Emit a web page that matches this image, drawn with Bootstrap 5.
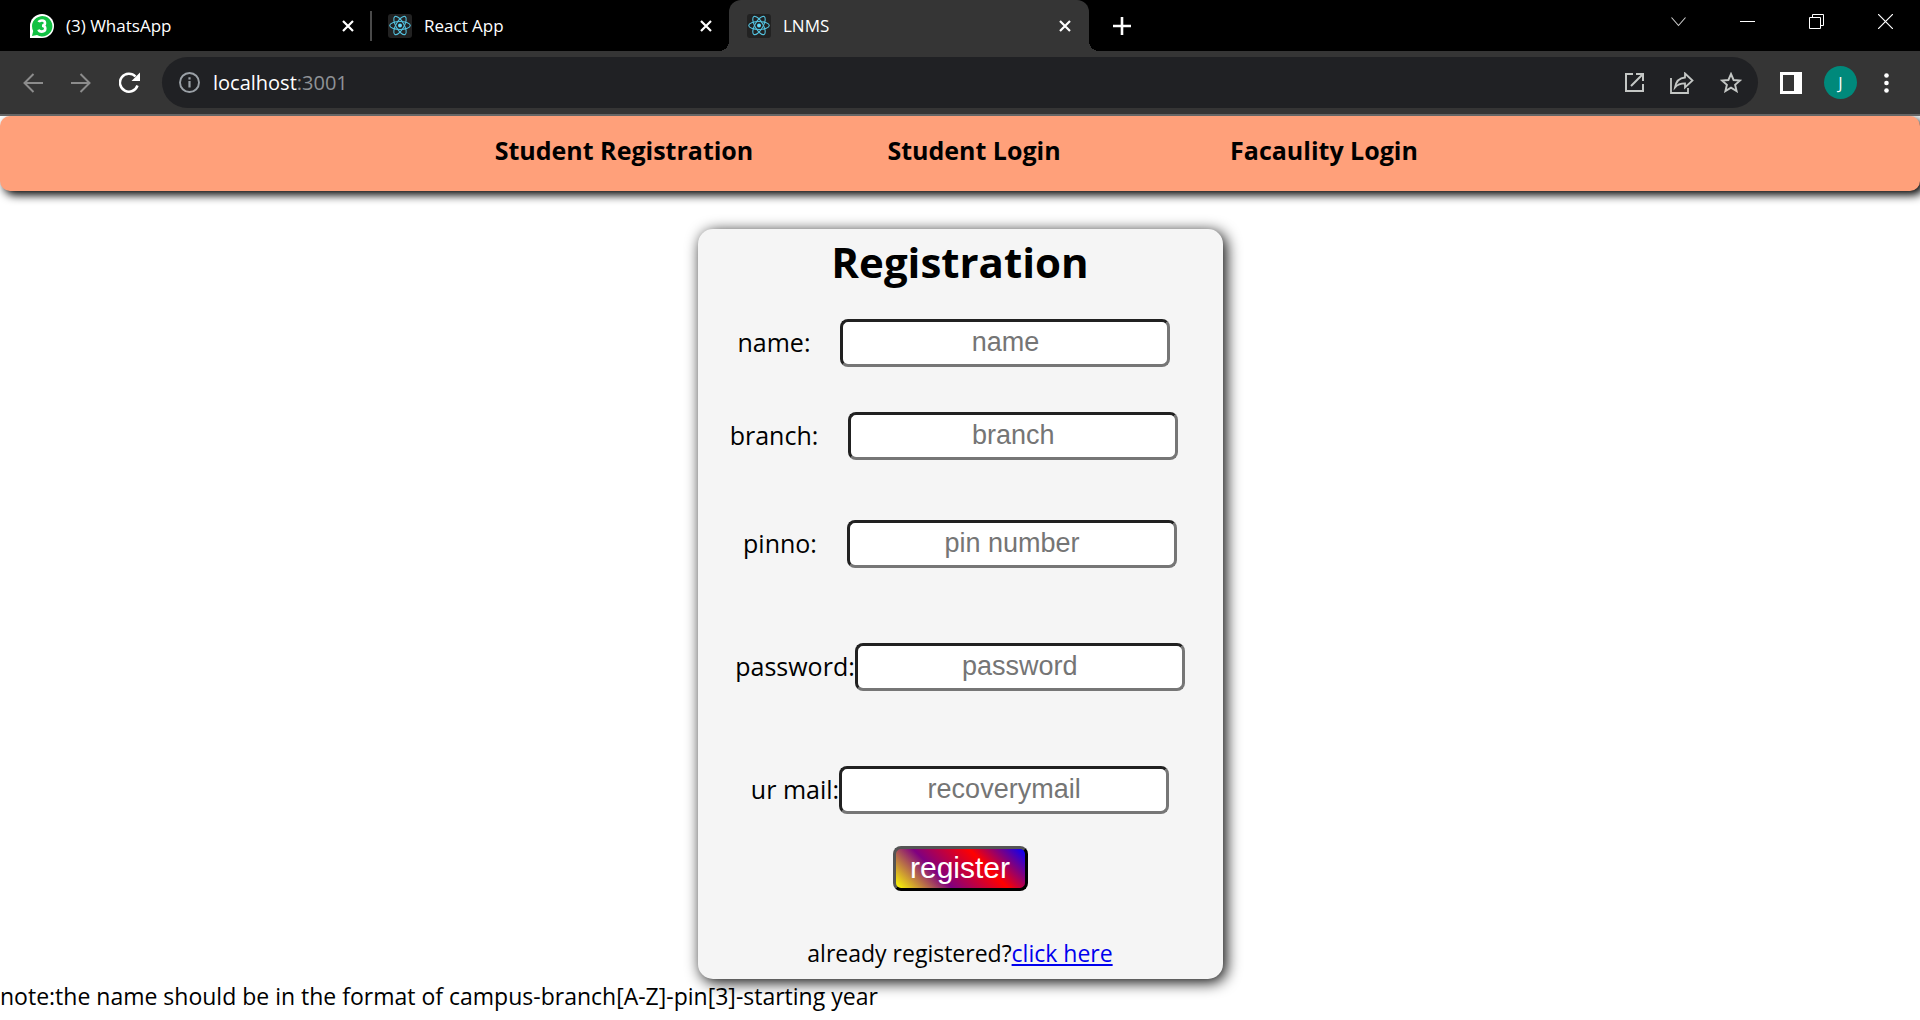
<!DOCTYPE html>
<html lang="en">
<head>
<meta charset="utf-8">
<meta name="viewport" content="width=device-width, initial-scale=1">
<title>LNMS</title>
<link href="https://cdn.jsdelivr.net/npm/bootstrap@5.3.0/dist/css/bootstrap.min.css" rel="stylesheet">
<style>
body { font-family: "Open Sans", "Noto Sans", sans-serif; font-size: 23px; line-height: 32px; color: #000; background: #fff; overflow-x: hidden; }
svg { display: block; flex: none; }
.tab-strip { background: #000; height: 51px; color: #fff; font-size: 17px; line-height: 24px; padding-left: 14px; }
.browser-tab { width: 358px; padding: 0 18px 0 16px; }
.browser-tab.selected { width: 360px; padding: 0 18px; margin-left: -1px; background: #353535; border-radius: 12px 12px 0 0; position: relative; }
.browser-tab.selected::before, .browser-tab.selected::after { content: ""; position: absolute; bottom: 0; width: 10px; height: 10px; }
.browser-tab.selected::before { right: 100%; background: radial-gradient(circle at 0 0, transparent 10px, #353535 10px); }
.browser-tab.selected::after { left: 100%; background: radial-gradient(circle at 100% 0, transparent 10px, #353535 10px); }
.tab-divider { width: 2px; height: 30px; margin-left: -2px; background: #4a4a4a; }
.plain-btn { border: 0; padding: 0; background: none; color: inherit; display: block; }
.window-controls { gap: 54px; padding-right: 27px; height: 43px; }
.toolbar { background: #353535; height: 65px; padding: 6px 30px 6px 23px; border-bottom: 2px solid #666; color: #fff; gap: 22px; }
.nav-icons { gap: 28px; }
.address-bar { height: 51px; border-radius: 26px; background: #202124; padding: 0 16px 0 17px; gap: 13px; }
.address-text { font-size: 20px; line-height: 28px; }
.address-text span { color: #8f9296; }
.address-icons { gap: 26px; color: #c4c7c5; }
.avatar { width: 33px; height: 33px; background: #00897b; font-size: 16px; line-height: 24px; }
.site-nav { background: #ffa07a; height: 75px; border-radius: 10px; box-shadow: 4px 4px 10px #000; padding: 16px 0 0 28px; }
.site-nav a { width: 350px; font-size: 25px; line-height: 36px; font-weight: 700; color: #000; text-align: center; text-decoration: none; }
.page-shade { background: #fff; }
.register-card { width: 525px; margin: 38px auto 0; background: #f5f5f5; border-radius: 15px; box-shadow: 3px 3px 15px #000; padding-bottom: 10px; }
.register-card h1 { font-size: 42px; line-height: 60px; font-weight: 700; margin: 0 0 27px; padding-top: 3px; }
.field-row { font-size: 25px; line-height: 36px; }
.field-row label { padding-bottom: 2px; }
.field-row.spaced { gap: 30px; }
.field-row.inset-end { padding-right: 12px; }
.gap-45 { margin-bottom: 45px; }
.gap-60 { margin-bottom: 60px; }
.gap-75 { margin-bottom: 75px; }
.text-entry { width: 330px; height: 48px; border: 3px inset #767676; border-radius: 8px; padding: 0 3px 2px; background: #fff; text-align: center; font: 27px/36px "Liberation Sans", Arial, sans-serif; }
.text-entry::placeholder { color: #757575; }
.register-btn { width: 135px; height: 45px; border: 3px outset #000; border-radius: 8px; margin: 32px auto 46px; padding: 0 0 2px; color: #fff; font: 30px/34px "Liberation Sans", Arial, sans-serif; background: linear-gradient(45deg, yellow, purple, red, blue); }
.login-line a { color: #0000ee; }
.format-note { padding-top: 1px; }
</style>
<script src="https://cdn.jsdelivr.net/npm/bootstrap@5.3.0/dist/js/bootstrap.bundle.min.js"></script>
</head>
<body>
<svg width="0" height="0" class="position-absolute" aria-hidden="true">
  <symbol id="react" viewBox="0 0 24 24">
    <rect width="24" height="24" rx="3" fill="#222"/>
    <g fill="none" stroke="#53c1de" stroke-width="1.1">
      <ellipse cx="12" cy="11.500" rx="10.300" ry="4"/>
      <ellipse cx="12" cy="11.500" rx="10.300" ry="4" transform="rotate(60 12 11.500)"/>
      <ellipse cx="12" cy="11.500" rx="10.300" ry="4" transform="rotate(120 12 11.500)"/>
    </g>
    <circle cx="12" cy="11.500" r="2" fill="#61dafb"/>
  </symbol>
  <symbol id="cross" viewBox="0 0 12 12"><path d="M1 1l10 10M11 1L1 11" stroke="#fff" stroke-width="2.200" fill="none"/></symbol>
</svg>

<header>
  <div class="tab-strip d-flex align-items-center">
    <div class="browser-tab d-flex align-items-center h-100">
      <svg class="me-2" width="24" height="24" viewBox="0 0 24 24"><path d="M0 24V12A12 12 0 1 1 12 24Z" fill="#fff"/><path d="M2 22l1.200-5A10.200 10.200 0 1 1 7 21Z" fill="#12c143"/><path d="M8.800 8.200Q9.300 6.500 12 6.500q3 0 3 2.600 0 2.500-3 2.600 3.300 0 3.300 2.900 0 3-3.400 3-2.800 0-3.400-2" fill="none" stroke="#fff" stroke-width="2.600"/></svg>
      <span class="ms-1">(3) WhatsApp</span>
      <button class="plain-btn ms-auto" aria-label="Close WhatsApp"><svg width="12" height="12"><use href="#cross"/></svg></button>
    </div>
    <div class="tab-divider"></div>
    <div class="browser-tab d-flex align-items-center h-100">
      <svg class="me-2" width="24" height="24"><use href="#react"/></svg>
      <span class="ms-1">React App</span>
      <button class="plain-btn ms-auto" aria-label="Close React App"><svg width="12" height="12"><use href="#cross"/></svg></button>
    </div>
    <div class="browser-tab selected d-flex align-items-center h-100">
      <svg class="me-2" width="24" height="24"><use href="#react"/></svg>
      <span class="ms-1">LNMS</span>
      <button class="plain-btn ms-auto" aria-label="Close LNMS"><svg width="12" height="12"><use href="#cross"/></svg></button>
    </div>
    <button class="plain-btn ms-4" aria-label="New tab"><svg width="18" height="18" viewBox="0 0 18 18"><path d="M9 0v18M0 9h18" stroke="#fff" stroke-width="2.600"/></svg></button>
    <div class="window-controls d-flex align-items-center ms-auto align-self-start">
      <button class="plain-btn" aria-label="Search tabs"><svg width="15" height="15" viewBox="0 0 15 15"><path d="M.5 3.500l7 8 7-8" fill="none" stroke="#ccc" stroke-width="1.100"/></svg></button>
      <button class="plain-btn" aria-label="Minimize"><svg width="15" height="15"><path d="M0 7.500h15" stroke="#fff"/></svg></button>
      <button class="plain-btn" aria-label="Restore"><svg width="15" height="15"><path d="M.5 3.500h11v11H.5zM3.500 3.500v-3h11v11h-3" fill="none" stroke="#fff"/></svg></button>
      <button class="plain-btn" aria-label="Close window"><svg width="15" height="15"><path d="M0 0l15 15M15 0L0 15" stroke="#fff" stroke-width="1.200"/></svg></button>
    </div>
  </div>

  <div class="toolbar d-flex align-items-center">
    <div class="nav-icons d-flex align-items-center">
      <button class="plain-btn" aria-label="Back"><svg width="20" height="20" viewBox="0 0 20 20"><path d="M20 10H1.500M10.500 1L1.500 10l9 9" fill="none" stroke="#8c8c8c" stroke-width="2"/></svg></button>
      <button class="plain-btn" aria-label="Forward"><svg width="20" height="20" viewBox="0 0 20 20"><path d="M0 10h18.500M9.500 1l9 9-9 9" fill="none" stroke="#8c8c8c" stroke-width="2"/></svg></button>
      <button class="plain-btn" aria-label="Reload"><svg width="21" height="21" viewBox="0 0 21 21"><path d="M18.500 13.500A9 9 0 1 1 16.500 4.500" fill="none" stroke="#fff" stroke-width="2.500"/><path d="M21 .5v8.500h-8.500z" fill="#fff"/></svg></button>
    </div>
    <div class="address-bar d-flex align-items-center flex-grow-1">
      <svg width="21" height="21" viewBox="0 0 21 21"><circle cx="10.500" cy="10.500" r="9.500" fill="none" stroke="#9aa0a6" stroke-width="1.900"/><path d="M10.500 9v6.500M10.500 5.300v2.200" stroke="#9aa0a6" stroke-width="2.200"/></svg>
      <div class="address-text">localhost<span>:3001</span></div>
      <div class="address-icons d-flex align-items-center ms-auto">
        <button class="plain-btn" aria-label="Open"><svg width="19" height="19" viewBox="0 0 19 19" fill="none" stroke="currentColor" stroke-width="2"><path d="M8 1H1v17h17v-7M11 1h7v7M18 1L6 13"/></svg></button>
        <button class="plain-btn" aria-label="Share"><svg width="24" height="22" viewBox="0 0 24 22" fill="none" stroke="currentColor" stroke-width="1.800"><path d="M1 6v15h17v-5"/><path d="M15 1.500l7.500 7-7.500 7v-4.200c-4.500 0-7.500 1-10 4 1-5.500 4-9.300 10-9.800z"/></svg></button>
        <button class="plain-btn" aria-label="Bookmark"><svg width="22" height="21" viewBox="0 0 22 21" fill="none" stroke="currentColor" stroke-width="1.900"><path d="M11 2l2.600 6 6.300.6-4.800 4.200 1.500 6.300-5.600-3.400-5.600 3.400 1.500-6.300L2.100 8.600l6.300-.6z"/></svg></button>
      </div>
    </div>
    <button class="plain-btn" aria-label="Side panel"><svg width="22" height="22"><path fill="#fff" fill-rule="evenodd" d="M0 0h22v22H0zM3 3v16h11V3z"/></svg></button>
    <button class="plain-btn avatar rounded-circle text-center" aria-label="Profile">J</button>
    <button class="plain-btn ms-1" aria-label="Menu"><svg width="7" height="20" viewBox="0 0 7 20" fill="#fff"><circle cx="3.500" cy="2.500" r="2.300"/><circle cx="3.500" cy="10" r="2.300"/><circle cx="3.500" cy="17.500" r="2.300"/></svg></button>
  </div>
</header>

<div class="overflow-hidden page-shade">
  <nav class="site-nav d-flex justify-content-center">
    <a href="#registration">Student Registration</a>
    <a href="#student">Student Login</a>
    <a href="#faculty">Facaulity Login</a>
  </nav>

  <form class="register-card d-flex flex-column" id="registration">
    <h1 class="text-center">Registration</h1>
    <div class="field-row spaced inset-end gap-45 d-flex align-items-center justify-content-center">
      <label for="name">name:</label><input class="text-entry" id="name" type="text" placeholder="name">
    </div>
    <div class="field-row spaced inset-end gap-60 d-flex align-items-center justify-content-center">
      <label for="branch">branch:</label><input class="text-entry" id="branch" type="text" placeholder="branch">
    </div>
    <div class="field-row spaced gap-75 d-flex align-items-center justify-content-center">
      <label for="pin">pinno:</label><input class="text-entry" id="pin" type="text" placeholder="pin number">
    </div>
    <div class="field-row gap-75 d-flex align-items-center justify-content-center">
      <label for="password">password:</label><input class="text-entry" id="password" type="password" placeholder="password">
    </div>
    <div class="field-row d-flex align-items-center justify-content-center">
      <label for="mail">ur mail:</label><input class="text-entry" id="mail" type="email" placeholder="recoverymail">
    </div>
    <button class="register-btn" type="button">register</button>
    <div class="login-line text-center">already registered?<a href="#student">click here</a></div>
  </form>
  <p class="format-note mb-0">note:the name should be in the format of campus-branch[A-Z]-pin[3]-starting year</p>
</div>
</body>
</html>
